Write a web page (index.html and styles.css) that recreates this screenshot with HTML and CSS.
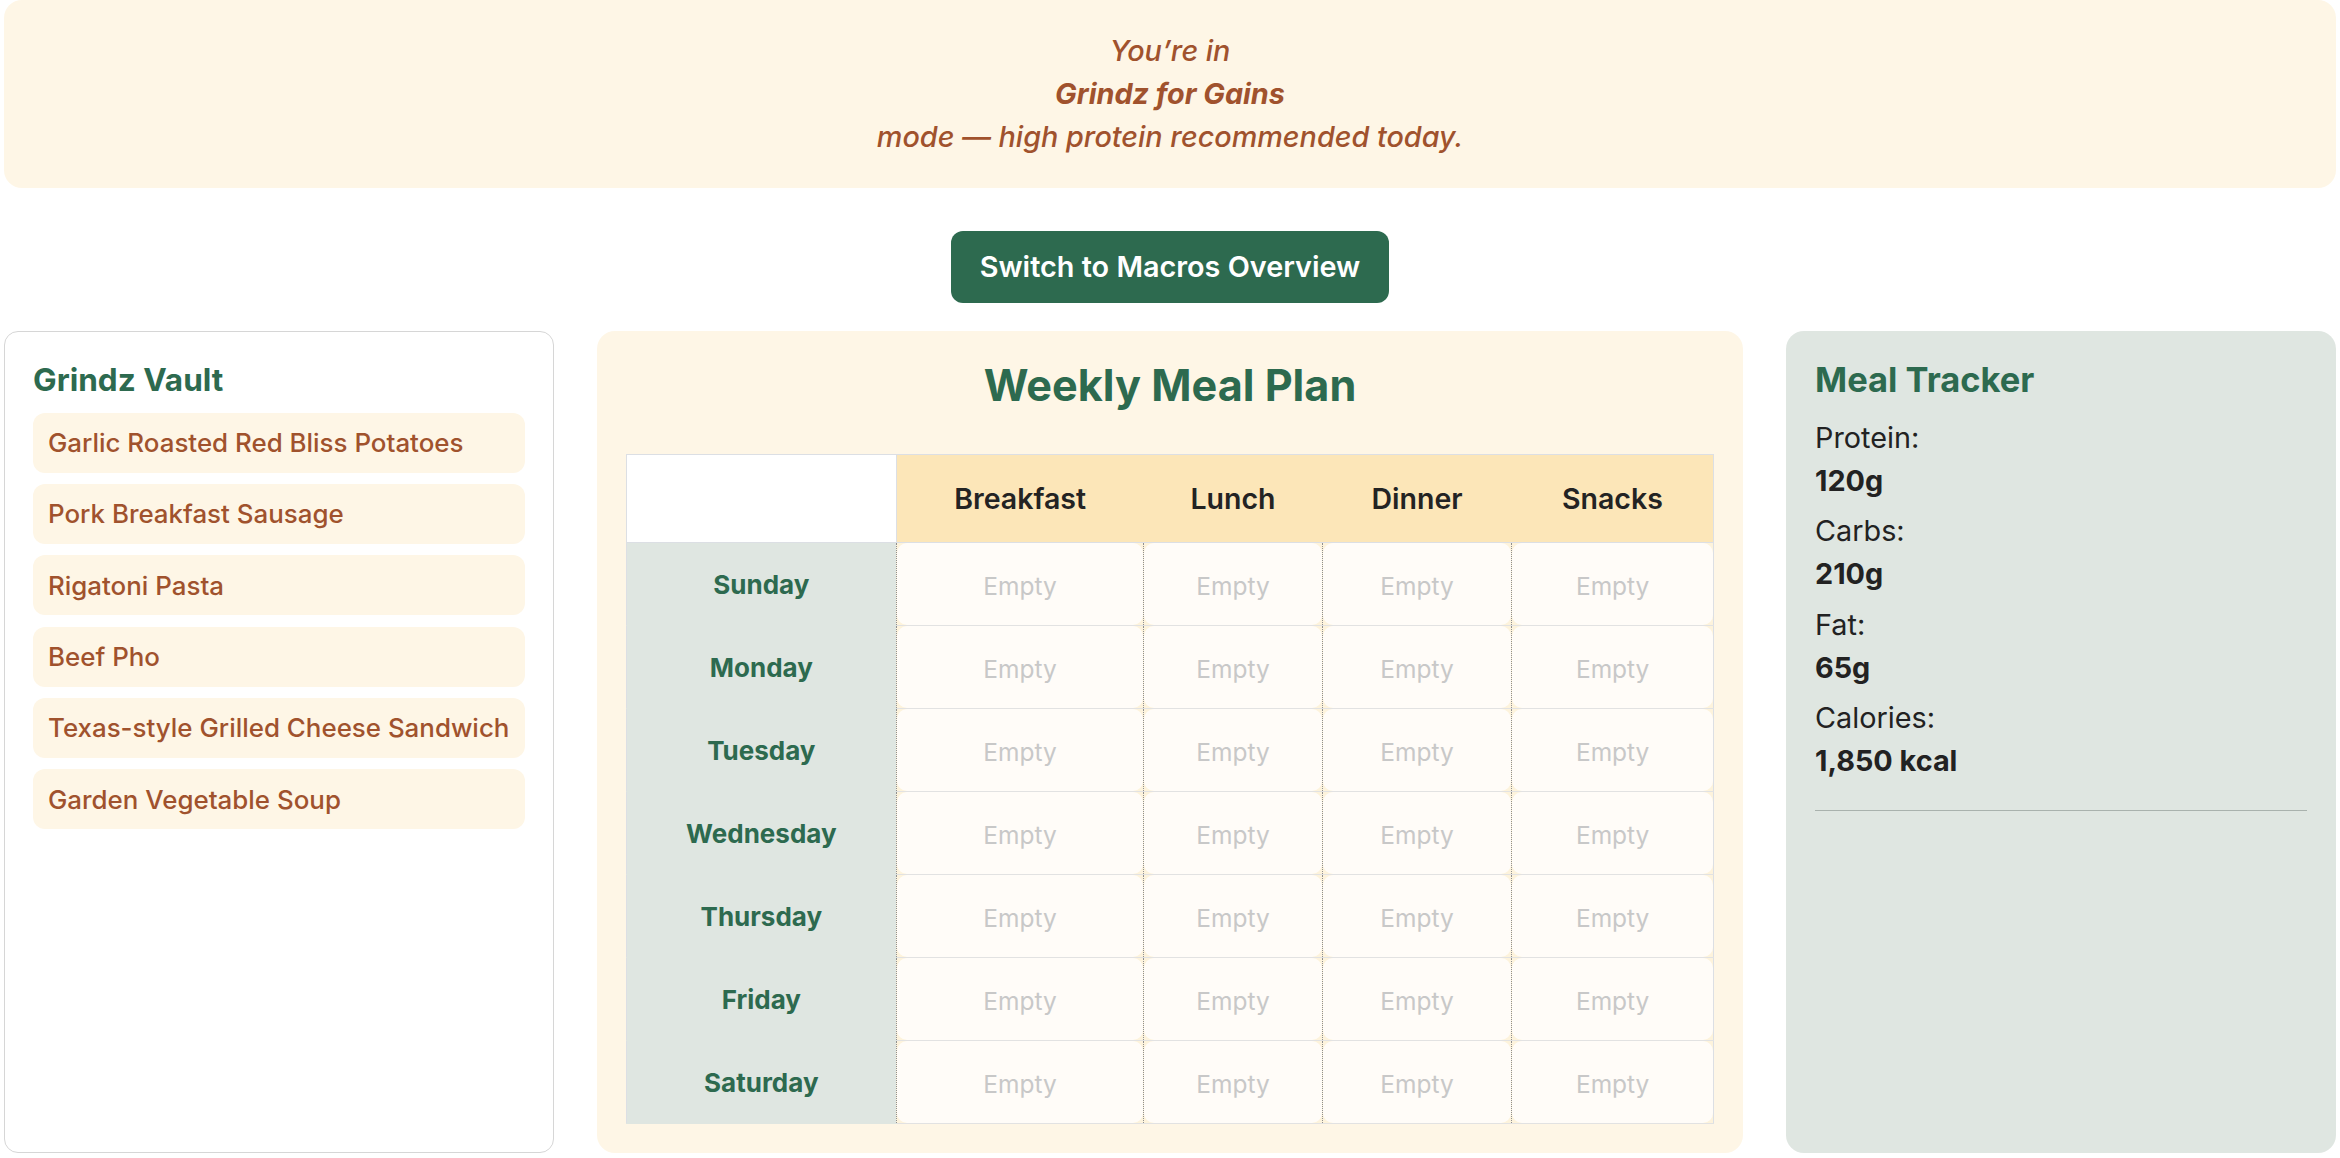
FILE: index.html
```html
<!DOCTYPE html>
<html lang="en">
<head>
<meta charset="utf-8">
<title>Grindz Meal Planner</title>
<link rel="stylesheet" href="styles.css">
</head>
<body>
<div class="page">
  <div class="banner">
    <span class="banner-line">You’re in</span>
    <strong class="banner-line banner-mode">Grindz for Gains</strong>
    <span class="banner-line">mode — high protein recommended today.</span>
  </div>

  <button class="switch-btn" type="button">Switch to Macros Overview</button>

  <div class="columns">
    <aside class="vault">
      <h3 class="panel-title vault-title">Grindz Vault</h3>
      <ul class="vault-list">
        <li class="vault-item">Garlic Roasted Red Bliss Potatoes</li>
        <li class="vault-item">Pork Breakfast Sausage</li>
        <li class="vault-item">Rigatoni Pasta</li>
        <li class="vault-item">Beef Pho</li>
        <li class="vault-item">Texas-style Grilled Cheese Sandwich</li>
        <li class="vault-item">Garden Vegetable Soup</li>
      </ul>
    </aside>

    <main class="planner">
      <h2 class="planner-title">Weekly Meal Plan</h2>
      <table class="plan">
        <colgroup>
          <col class="col-day">
          <col class="col-breakfast">
          <col class="col-lunch">
          <col class="col-dinner">
          <col class="col-snacks">
        </colgroup>
        <thead>
          <tr>
            <th class="corner"></th>
            <th class="meal-head">Breakfast</th>
            <th class="meal-head">Lunch</th>
            <th class="meal-head">Dinner</th>
            <th class="meal-head">Snacks</th>
          </tr>
        </thead>
        <tbody>
          <tr><th class="day">Sunday</th><td class="slot"><div class="drop">Empty</div></td><td class="slot"><div class="drop">Empty</div></td><td class="slot"><div class="drop">Empty</div></td><td class="slot"><div class="drop">Empty</div></td></tr>
          <tr><th class="day">Monday</th><td class="slot"><div class="drop">Empty</div></td><td class="slot"><div class="drop">Empty</div></td><td class="slot"><div class="drop">Empty</div></td><td class="slot"><div class="drop">Empty</div></td></tr>
          <tr><th class="day">Tuesday</th><td class="slot"><div class="drop">Empty</div></td><td class="slot"><div class="drop">Empty</div></td><td class="slot"><div class="drop">Empty</div></td><td class="slot"><div class="drop">Empty</div></td></tr>
          <tr><th class="day">Wednesday</th><td class="slot"><div class="drop">Empty</div></td><td class="slot"><div class="drop">Empty</div></td><td class="slot"><div class="drop">Empty</div></td><td class="slot"><div class="drop">Empty</div></td></tr>
          <tr><th class="day">Thursday</th><td class="slot"><div class="drop">Empty</div></td><td class="slot"><div class="drop">Empty</div></td><td class="slot"><div class="drop">Empty</div></td><td class="slot"><div class="drop">Empty</div></td></tr>
          <tr><th class="day">Friday</th><td class="slot"><div class="drop">Empty</div></td><td class="slot"><div class="drop">Empty</div></td><td class="slot"><div class="drop">Empty</div></td><td class="slot"><div class="drop">Empty</div></td></tr>
          <tr><th class="day">Saturday</th><td class="slot"><div class="drop">Empty</div></td><td class="slot"><div class="drop">Empty</div></td><td class="slot"><div class="drop">Empty</div></td><td class="slot"><div class="drop">Empty</div></td></tr>
        </tbody>
      </table>
    </main>

    <aside class="tracker">
      <h3 class="panel-title tracker-title">Meal Tracker</h3>
      <div class="stats">
        <div class="stat"><div class="stat-label">Protein:</div><div class="stat-value">120g</div></div>
        <div class="stat"><div class="stat-label">Carbs:</div><div class="stat-value">210g</div></div>
        <div class="stat"><div class="stat-label">Fat:</div><div class="stat-value">65g</div></div>
        <div class="stat"><div class="stat-label">Calories:</div><div class="stat-value">1,850 kcal</div></div>
      </div>
      <hr class="divider">
    </aside>
  </div>
</div>
</body>
</html>
```

FILE: styles.css
```css
* { box-sizing: border-box; }

html, body {
  margin: 0;
  padding: 0;
  background: #ffffff;
}

body {
  font-family: Inter, "Noto Sans", "Liberation Sans", sans-serif;
  color: #222222;
}

.page {
  padding: 0 4px 6px;
}

.banner {
  background: #fef6e6;
  border-radius: 18px;
  padding: 29px 20px;
  text-align: center;
  color: #a0522d;
  font-style: italic;
  font-weight: 500;
  font-size: 28.8px;
  line-height: 43.2px;
}

.banner-line {
  display: block;
}

.banner-mode {
  font-weight: 700;
}

.switch-btn {
  display: block;
  margin: 43px auto 28px;
  height: 72px;
  padding: 0 29px;
  background: #2d6a4f;
  color: #ffffff;
  border: none;
  border-radius: 12px;
  font-family: Inter, "Noto Sans", sans-serif;
  font-size: 28.8px;
  font-weight: 600;
  cursor: pointer;
}

.columns {
  display: grid;
  grid-template-columns: 550px 1fr 550px;
  column-gap: 43px;
  align-items: stretch;
}

.panel-title {
  margin: 0;
  font-weight: 700;
  line-height: normal;
  color: #2d6a4f;
}

.vault-title {
  font-size: 31.5px;
  margin-bottom: 13.5px;
}

.tracker-title {
  font-size: 34.5px;
  margin-bottom: 11.5px;
}

/* Vault */
.vault {
  background: #ffffff;
  border: 1.5px solid #d6d6d6;
  border-radius: 14px;
  padding: 28.5px 28px;
}

.vault-list {
  list-style: none;
  margin: 0;
  padding: 0;
  display: flex;
  flex-direction: column;
  gap: 11.3px;
}

.vault-item {
  background: #fef6e6;
  color: #a0522d;
  border-radius: 12px;
  padding: 14.5px 15px;
  font-size: 25.9px;
  font-weight: 500;
  line-height: 31px;
}

/* Planner */
.planner {
  background: #fef6e6;
  border-radius: 18px;
  padding: 28.8px;
}

.planner-title {
  margin: 0 0 43px;
  text-align: center;
  font-size: 43.2px;
  font-weight: 700;
  line-height: normal;
  color: #2d6a4f;
}

.plan {
  width: 100%;
  border-collapse: collapse;
  table-layout: fixed;
  border: 1px solid #dcdfe4;
}

.col-day { width: 270px; }
.col-breakfast { width: 247px; }
.col-lunch { width: 179px; }
.col-dinner { width: 189px; }
.col-snacks { width: 202px; }

.plan th.corner {
  background: #ffffff;
  border: 1px solid #dcdfe4;
  height: 88px;
}

.plan th.meal-head {
  background: #fce6b8;
  border-top: 1px solid #dcdfe4;
  border-bottom: 1px solid #dcdfe4;
  height: 88px;
  padding: 0;
  font-size: 28.5px;
  font-weight: 600;
  color: #232323;
  text-align: center;
}

.plan th.day {
  background: #dfe6e1;
  color: #2d6a4f;
  font-size: 26px;
  font-weight: 700;
  text-align: center;
  height: 83px;
  padding: 0;
  border-bottom: 1px solid #dfe6e1;
  border-right: 1px dotted #8f8f8f;
}

.plan td.slot {
  background: #fdf3dc;
  padding: 0;
  height: 83px;
  border-left: 1px dotted #8f8f8f;
  border-right: 1px dotted #8f8f8f;
  border-bottom: 1px solid #e2e2e2;
}

.drop {
  height: 82px;
  background: #fffcf8;
  border-radius: 10px;
  display: flex;
  align-items: center;
  justify-content: center;
  padding-top: 4px;
  color: #c8c8c8;
  font-size: 24.5px;
  font-weight: 400;
}

/* Tracker */
.tracker {
  background: #dfe6e1;
  border-radius: 18px;
  padding: 28.8px 29px;
}

.stats {
  padding-top: 4px;
}

.stat {
  margin-bottom: 7.5px;
  font-size: 28.8px;
  line-height: 43px;
  color: #222222;
}

.stat-value {
  font-weight: 700;
}

.divider {
  margin: 28px 0 0;
  border: none;
  border-top: 1.5px solid #a9b2ad;
}
```
